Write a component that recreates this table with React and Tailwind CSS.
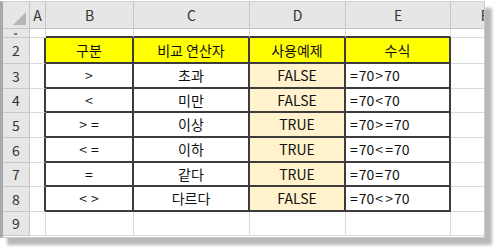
import React from "react";

const FONT = { fontFamily: '"Noto Sans CJK KR", "Noto Sans", sans-serif' };

const COLS = ["A", "B", "C", "D", "E", "F"];
const WIDTHS = ["w-[16px]", "w-[88px]", "w-[116px]", "w-[96px]", "w-[105px]", "w-[68px]"];

const ROWS = [
  { n: 2, h: "h-[26px]", cells: ["구분", "비교 연산자", "사용예제", "수식"], head: true },
  { n: 3, h: "h-[25px]", cells: [">", "초과", "FALSE", "=70>70"] },
  { n: 4, h: "h-[24px]", cells: ["<", "미만", "FALSE", "=70<70"] },
  { n: 5, h: "h-[25px]", cells: [">=", "이상", "TRUE", "=70>=70"] },
  { n: 6, h: "h-[25px]", cells: ["<=", "이하", "TRUE", "=70<=70"] },
  { n: 7, h: "h-[24px]", cells: ["=", "같다", "TRUE", "=70=70"] },
  { n: 8, h: "h-[25px]", cells: ["<>", "다르다", "FALSE", "=70<>70"] },
];

// comparison operators get a little air around them, like the sheet's font draws them
function Spaced({ text, pad }) {
  return (
    <>
      {Array.from(text).map((ch, i) =>
        "<>=".includes(ch) ? (
          <span key={i} className={pad}>{ch}</span>
        ) : (
          <span key={i}>{ch}</span>
        )
      )}
    </>
  );
}

function RowHeader({ children, h }) {
  return (
    <div className={`w-[27px] ${h} shrink-0 bg-[#e6e6e6] border-r border-b border-[#c6c6c6] flex items-center justify-center text-[14px] text-[#333] overflow-hidden`}>
      {children}
    </div>
  );
}

function Blank({ w, h, extra = "" }) {
  return <div className={`${w} ${h} shrink-0 border-r border-b border-[#dadada] ${extra}`} />;
}

export default function App() {
  return (
    <div className="w-[500px] h-[250px] bg-white relative overflow-hidden" style={FONT}>
      <div className="w-[485px] h-[237px] mt-px bg-white border-l-[3px] border-t border-r border-b border-l-[#a8a8a8] border-t-[#d0d0d0] border-r-[#c8c8c8] border-b-[#c8c8c8] shadow-[7px_7px_3px_#b8b8b8] flex flex-col overflow-hidden">
        {/* column header strip */}
        <div className="flex h-[27px] shrink-0">
          <div className="w-[27px] h-[27px] shrink-0 bg-[#e6e6e6] border-r border-b border-[#c6c6c6] flex items-end justify-end pr-[2px] pb-[2px]">
            <svg width="14" height="14" viewBox="0 0 14 14">
              <polygon points="13,0 13,13 0,13" fill="#b5b5b5" />
            </svg>
          </div>
          {COLS.map((c, i) => (
            <div
              key={c}
              className={`${WIDTHS[i]} h-[27px] shrink-0 bg-[#e6e6e6] border-r border-b border-[#c6c6c6] flex items-center justify-center text-[14px] text-[#333] overflow-hidden`}
            >
              {c}
            </div>
          ))}
        </div>

        {/* row 1, mostly scrolled out of view */}
        <div className="flex h-[9px] shrink-0">
          <div className="w-[27px] h-[9px] shrink-0 bg-[#e6e6e6] border-r border-b border-[#c6c6c6] overflow-hidden flex justify-center">
            <span className="block text-[14px] leading-[14px] text-[#555] mt-[1px] h-[5px] overflow-hidden">1</span>
          </div>
          <Blank w="w-[16px]" h="h-[9px]" />
          <Blank w="w-[88px]" h="h-[9px]" extra="!border-b-2 !border-b-[#3c3c3c]" />
          <Blank w="w-[116px]" h="h-[9px]" extra="!border-b-2 !border-b-[#3c3c3c]" />
          <Blank w="w-[96px]" h="h-[9px]" extra="!border-b-2 !border-b-[#3c3c3c]" />
          <Blank w="w-[105px]" h="h-[9px]" extra="!border-b-2 !border-b-[#3c3c3c]" />
          <Blank w="w-[68px]" h="h-[9px]" />
        </div>

        {/* data rows */}
        {ROWS.map((r) => (
          <div key={r.n} className={`flex ${r.h} shrink-0`}>
            <RowHeader h={r.h}>{r.n}</RowHeader>
            <div className={`w-[16px] ${r.h} shrink-0 border-r-2 border-r-[#3c3c3c] border-b border-b-[#dadada]`} />
            {r.cells.map((t, i) => {
              const bg = r.head ? "bg-[#ffff00]" : i === 2 ? "bg-[#fff2cc]" : "bg-white";
              const align = !r.head && i === 3 ? "justify-start pl-[3px]" : "justify-center";
              let content = t;
              if (!r.head && i === 0) content = <Spaced text={t} pad="px-[2px]" />;
              if (!r.head && i === 3) content = <Spaced text={t} pad="px-[1px]" />;
              return (
                <div
                  key={i}
                  className={`${WIDTHS[i + 1]} ${r.h} shrink-0 ${bg} border-r-2 border-b-2 border-[#3c3c3c] flex items-center ${align} text-[14px] text-[#111] whitespace-nowrap`}
                >
                  {content}
                </div>
              );
            })}
            <Blank w="w-[68px]" h={r.h} />
          </div>
        ))}

        {/* row 9 */}
        <div className="flex h-[24px] shrink-0">
          <RowHeader h="h-[24px]">9</RowHeader>
          <Blank w="w-[16px]" h="h-[24px]" />
          <Blank w="w-[88px]" h="h-[24px]" />
          <Blank w="w-[116px]" h="h-[24px]" />
          <Blank w="w-[96px]" h="h-[24px]" />
          <Blank w="w-[105px]" h="h-[24px]" />
          <Blank w="w-[68px]" h="h-[24px]" />
        </div>
      </div>
    </div>
  );
}
